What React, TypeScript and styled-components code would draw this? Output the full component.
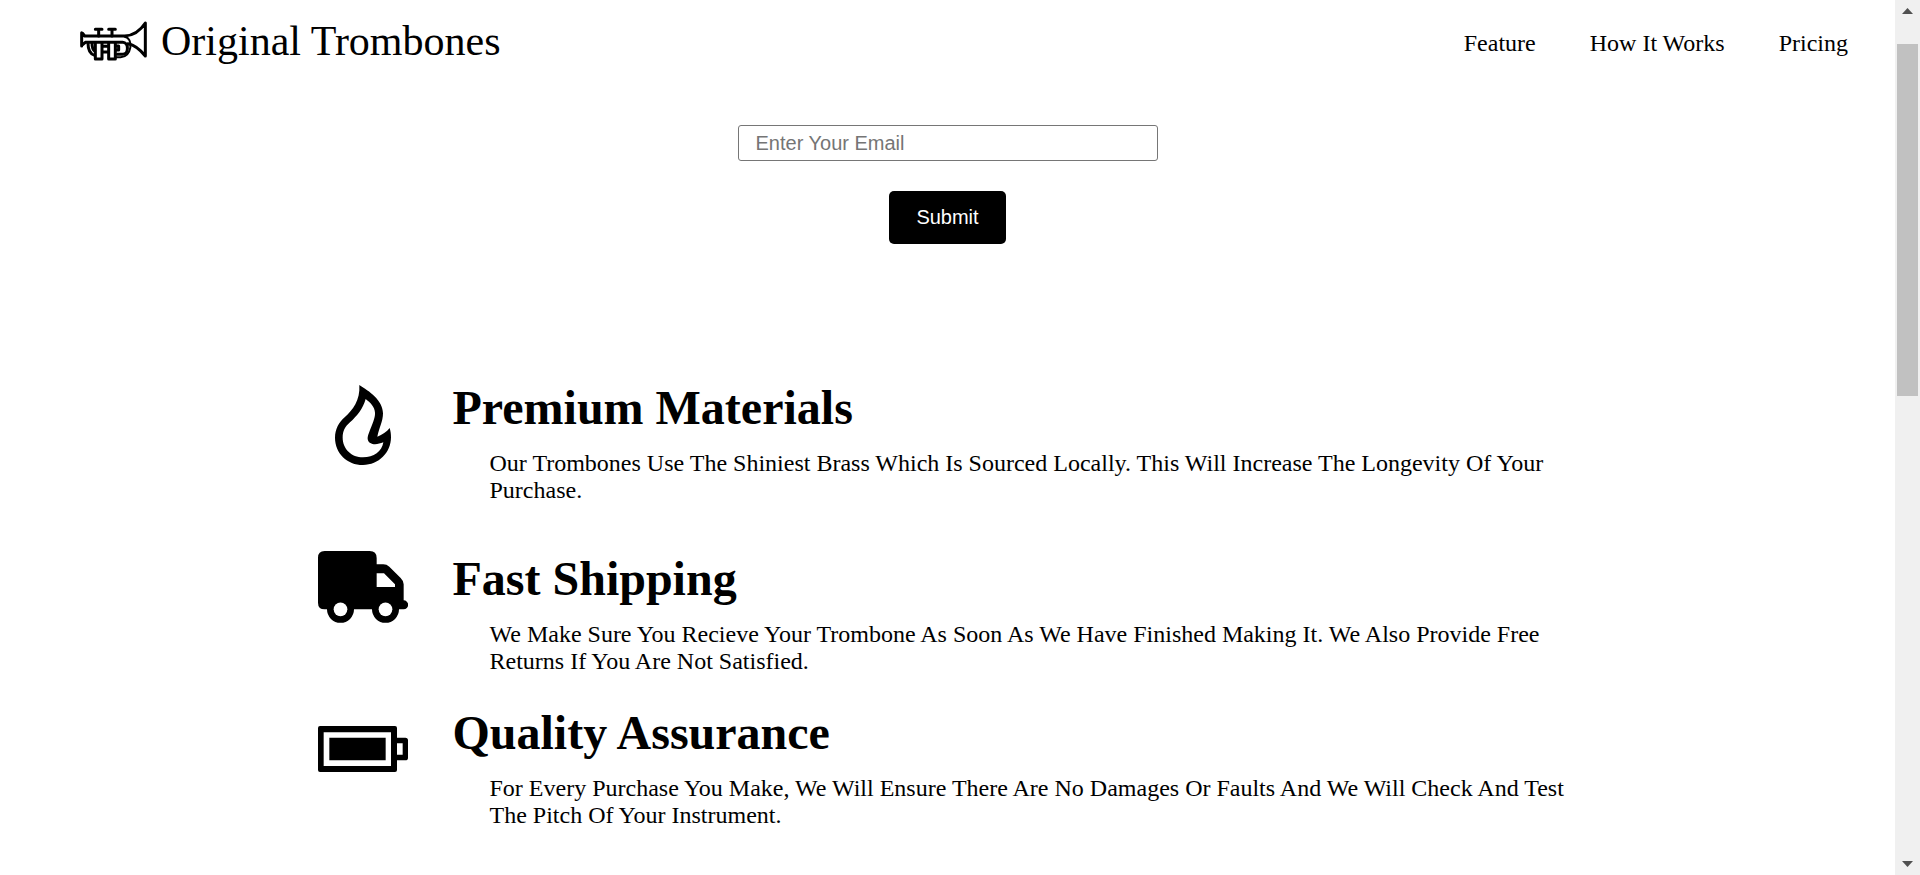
import React from "react";
import styled, { createGlobalStyle } from "styled-components";

const GlobalStyle = createGlobalStyle`
  * { box-sizing: border-box; }
  body {
    margin: 0;
    background: #fff;
    color: #000;
    font-family: "Liberation Serif", "Times New Roman", serif;
  }
`;

const Page = styled.div`
  display: flex;
  min-height: 100vh;
`;

const Content = styled.div`
  flex: 1;
  min-width: 0;
`;

const Header = styled.header`
  display: flex;
  align-items: center;
  justify-content: space-between;
  padding: 0 47px 0 80px;
  height: 86px;
`;

const Brand = styled.a`
  display: flex;
  align-items: center;
  gap: 13px;
  color: inherit;
  text-decoration: none;
  font-size: 42px;
  line-height: 48px;
  padding-bottom: 4px;
`;

const Nav = styled.nav`
  display: flex;
  gap: 54px;
`;

const NavLink = styled.a`
  color: inherit;
  text-decoration: none;
  font-size: 24px;
  line-height: 27px;
`;

const EmailForm = styled.form`
  display: flex;
  flex-direction: column;
  align-items: center;
  gap: 30px;
  padding-top: 39px;
`;

const EmailInput = styled.input`
  width: 420px;
  height: 36px;
  padding: 0 17px;
  border: 1px solid #767676;
  border-radius: 3px;
  font-family: "Liberation Sans", Arial, sans-serif;
  font-size: 20px;
  &::placeholder { color: #757575; }
`;

const SubmitButton = styled.button`
  padding: 15px 27px;
  border: 0;
  border-radius: 5px;
  background: #000;
  color: #fff;
  font-family: "Liberation Sans", Arial, sans-serif;
  font-size: 20px;
  line-height: 23px;
`;

const Features = styled.section`
  width: 80%;
  max-width: 1260px;
  margin: 0 auto;
  padding: 136px 0 20px;
`;

const FeatureRow = styled.article<{ $spaced?: boolean }>`
  display: grid;
  grid-template-columns: 90px 1fr;
  column-gap: 45px;
  padding-bottom: ${(p) => (p.$spaced ? 47 : 30)}px;
`;

const IconCell = styled.div<{ $drop: number }>`
  padding-top: ${(p) => p.$drop}px;
  svg { display: block; }
`;

const FeatureTitle = styled.h2`
  margin: 0;
  font-size: 48px;
  line-height: 55px;
`;

const FeatureText = styled.p`
  margin: 15px 0 0;
  padding-left: 37px;
  font-size: 24px;
  line-height: 27px;
`;

const ScrollTrack = styled.div`
  position: sticky;
  top: 0;
  display: flex;
  flex-direction: column;
  align-items: center;
  flex: 0 0 25px;
  height: 100vh;
  padding: 8px 0;
  background: #f0f0f0;
`;

const ScrollThumb = styled.div`
  width: 21px;
  height: 41%;
  margin: 30px 0 auto;
  background: #c1c1c1;
`;

const HornIcon = () => (
  <svg width="68" height="40" viewBox="30 32 204 120" fill="none" stroke="#000" strokeWidth="9" strokeLinecap="round" strokeLinejoin="round" aria-hidden="true">
    <path d="M35 67v40M38 69l6 8h120q38-2 62-39v99q-25-32-52-37M37 104l9-8h112c19 0 19 36 0 36h-16" />
    <path d="M164 79c13 2 20 17 17 33-3 17-14 28-29 29h-14" strokeWidth="6" />
    <path d="M54 98c0 22 8 34 20 37M66 98c0 14 2 20 8 24M76 57h20M116 57h20M86 57v20M126 57v20" />
    <path d="M76 98v48h20V98M116 98v48h20V98M97 108h18M97 125h18M138 107h8v12h-8" />
  </svg>
);

const FlameIcon = () => (
  <svg width="90" height="80" viewBox="54 45 270 240" aria-hidden="true">
    <path
      fillRule="evenodd"
      d="M178 45C207 63 249 91 249 130C249 155 237 174 232 200C247 195 260 185 269 174C272 184 273 193 273 202C273 248 236 285 189 285C141 285 105 249 105 203C105 178 116 158 134 142C158 120 181 91 178 45ZM197 87C189 116 171 138 150 157C135 170 128 183 128 203C128 237 155 262 189 262C221 262 246 244 250 217C236 223 220 225 211 219C200 212 202 200 207 188C216 163 226 145 225 128C224 110 211 98 197 87Z"
    />
  </svg>
);

const TruckIcon = () => (
  <svg width="90" height="72" viewBox="54 60 270 216" aria-hidden="true">
    <path
      fillRule="evenodd"
      d="M74 60H209Q230 60 230 81V100H250Q260 100 268 107L302 141Q311 150 311 160V208A13.500 13.500 0 0 1 311 235H297A40.500 40.500 0 0 1 216 235H162A40.500 40.500 0 0 1 81 235H74Q54 235 54 215V80Q54 60 74 60ZM230 127V168H285V160L252 127Z"
    />
    <circle cx="121.500" cy="235" r="20.500" fill="#fff" />
    <circle cx="256.500" cy="235" r="20.500" fill="#fff" />
  </svg>
);

const BatteryIcon = () => (
  <svg width="90" height="46" viewBox="54 48 270 138" aria-hidden="true">
    <path
      fillRule="evenodd"
      d="M60 48H285Q291 48 291 54V83H316Q324 83 324 91V143Q324 151 316 151H291V180Q291 186 285 186H60Q54 186 54 180V54Q54 48 60 48ZM71 67V168H273V67ZM291 100V134H308V100Z"
    />
    <path d="M88 83H257V151H88Z" />
  </svg>
);

const features = [
  {
    title: "Premium Materials",
    text: "Our Trombones Use The Shiniest Brass Which Is Sourced Locally. This Will Increase The Longevity Of Your Purchase.",
    icon: <FlameIcon />,
    drop: 5,
    spaced: true,
  },
  {
    title: "Fast Shipping",
    text: "We Make Sure You Recieve Your Trombone As Soon As We Have Finished Making It. We Also Provide Free Returns If You Are Not Satisfied.",
    icon: <TruckIcon />,
    drop: 0,
  },
  {
    title: "Quality Assurance",
    text: "For Every Purchase You Make, We Will Ensure There Are No Damages Or Faults And We Will Check And Test The Pitch Of Your Instrument.",
    icon: <BatteryIcon />,
    drop: 21,
  },
];

export default function App() {
  return (
    <>
      <GlobalStyle />
      <Page>
        <Content>
          <Header>
            <Brand href="#">
              <HornIcon />
              <span>Original Trombones</span>
            </Brand>
            <Nav>
              <NavLink href="#feature">Feature</NavLink>
              <NavLink href="#how-it-works">How It Works</NavLink>
              <NavLink href="#pricing">Pricing</NavLink>
            </Nav>
          </Header>
          <main>
            <EmailForm>
              <EmailInput type="email" placeholder="Enter Your Email" aria-label="Enter Your Email" />
              <SubmitButton type="submit">Submit</SubmitButton>
            </EmailForm>
            <Features id="feature">
              {features.map((f) => (
                <FeatureRow key={f.title} $spaced={f.spaced}>
                  <IconCell $drop={f.drop}>{f.icon}</IconCell>
                  <div>
                    <FeatureTitle>{f.title}</FeatureTitle>
                    <FeatureText>{f.text}</FeatureText>
                  </div>
                </FeatureRow>
              ))}
            </Features>
          </main>
        </Content>
        <ScrollTrack aria-hidden="true">
          <svg width="11" height="6" viewBox="0 0 11 6"><path d="M0 6L5.500 0L11 6Z" fill="#505050" /></svg>
          <ScrollThumb />
          <svg width="11" height="6" viewBox="0 0 11 6"><path d="M0 0L5.500 6L11 0Z" fill="#505050" /></svg>
        </ScrollTrack>
      </Page>
    </>
  );
}
